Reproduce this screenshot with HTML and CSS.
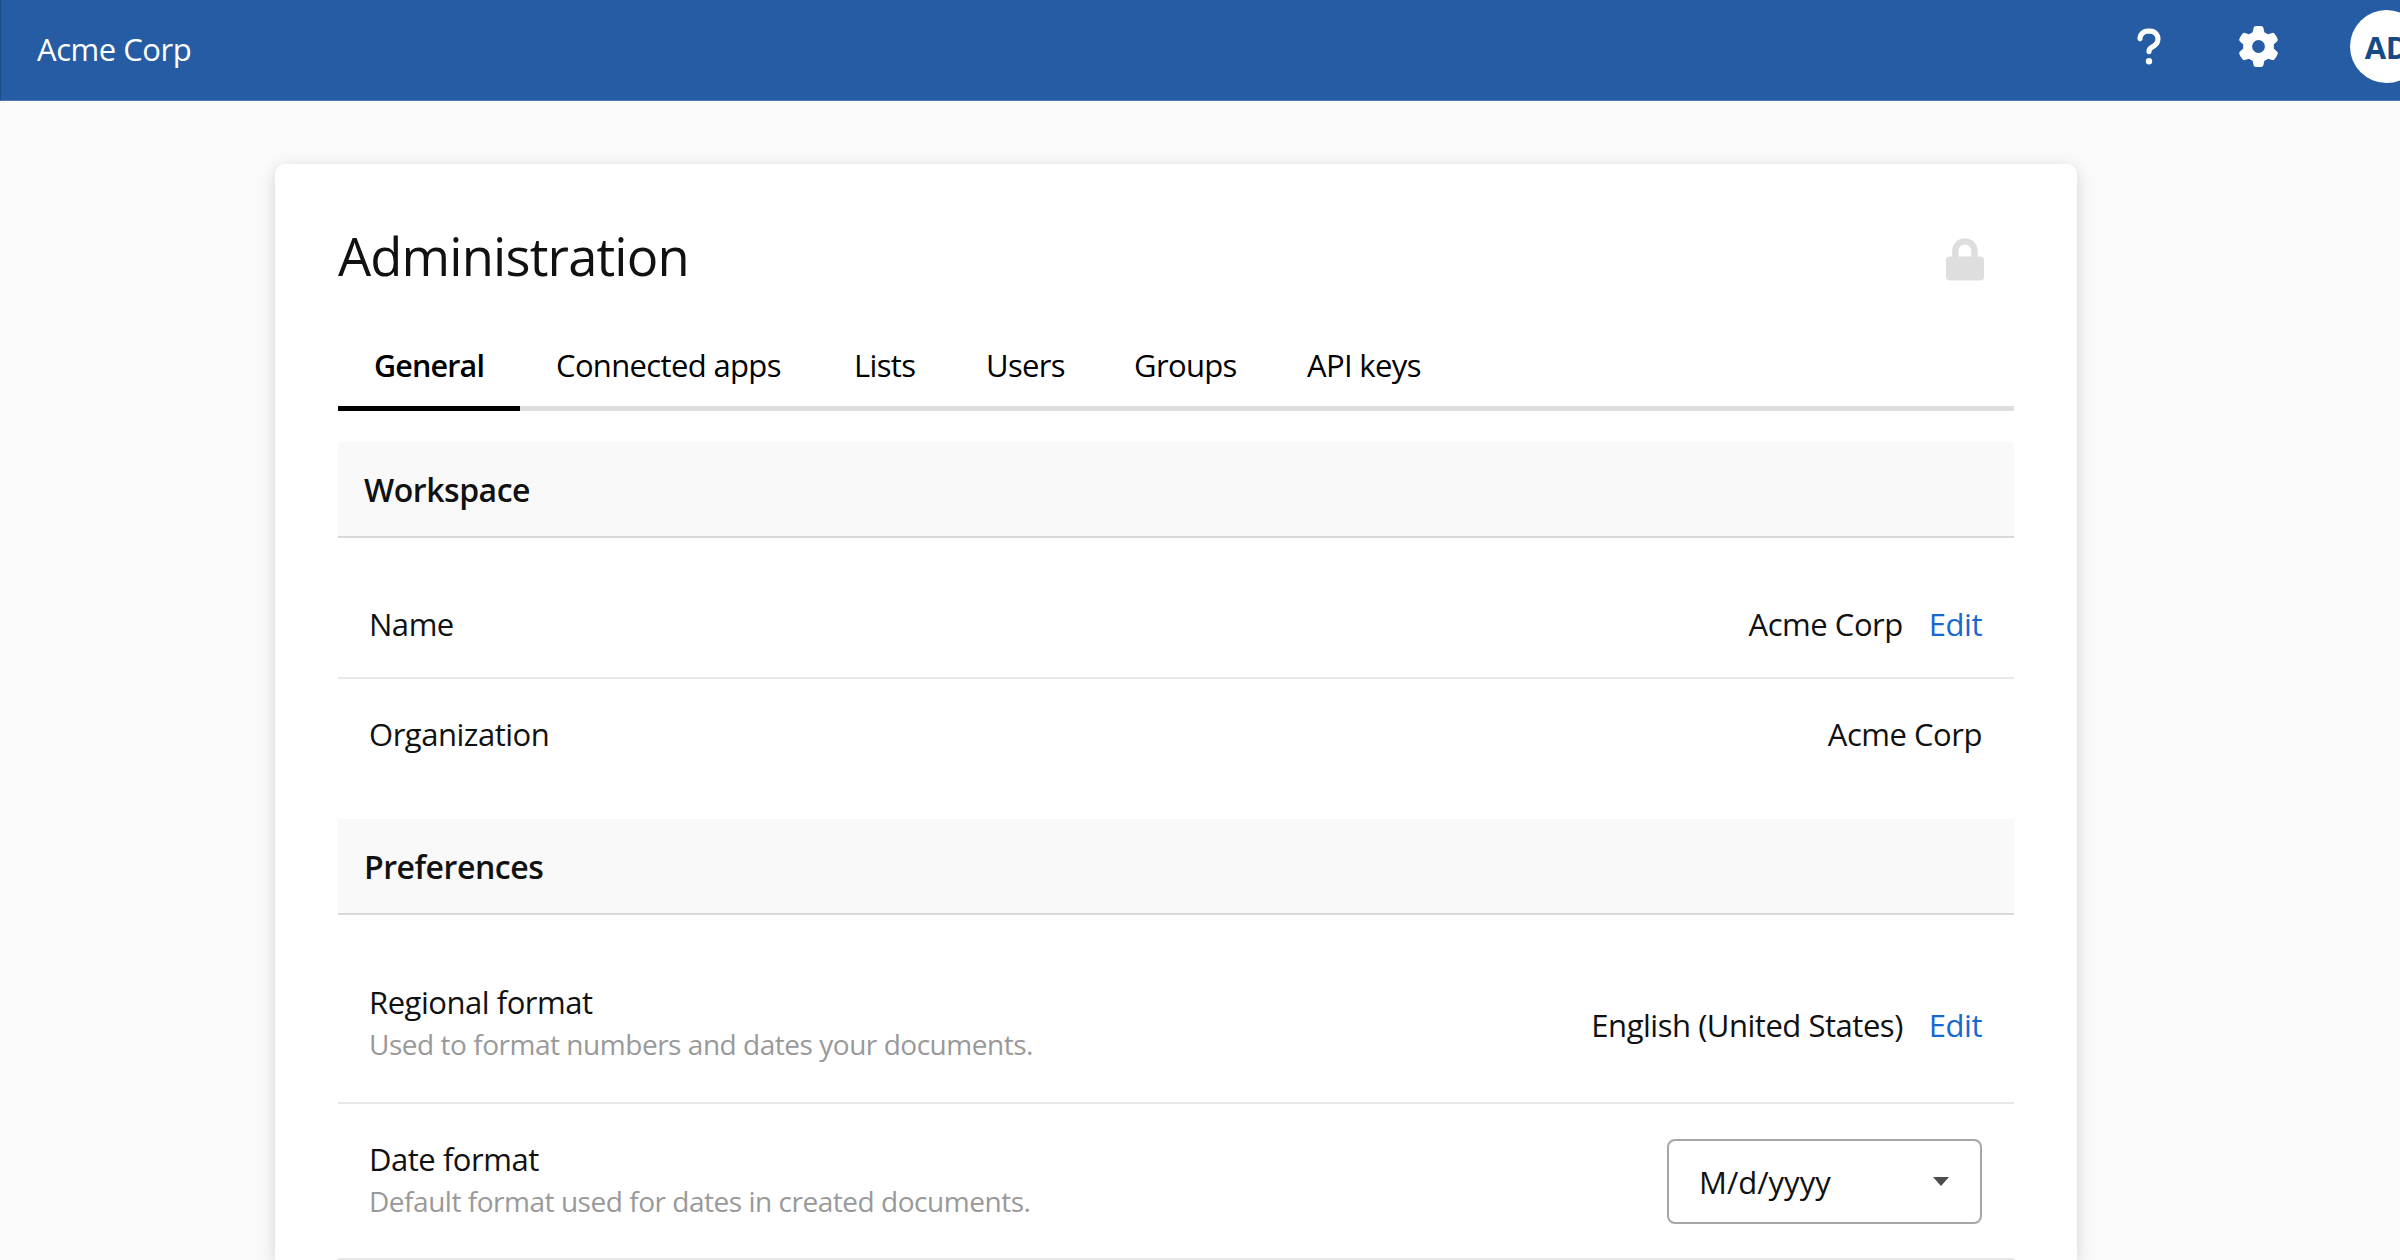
FILE: index.html
```html
<!DOCTYPE html>
<html lang="en">
<head>
    <meta charset="UTF-8">
    <meta name="viewport" content="width=device-width, initial-scale=1.0">
    <title>Administration - Acme Corp</title>
    <link rel="stylesheet" href="styles.css">
</head>
<body>
    <header class="topbar">
        <span class="brand">Acme Corp</span>
        <nav class="topbar-actions">
            <a class="icon-link" aria-label="Help">
                <svg class="icon-help" viewBox="0 0 320 512" fill="currentColor"><path d="M80 160c0-35.3 28.7-64 64-64h32c35.3 0 64 28.7 64 64v3.6c0 21.8-11.1 42.1-29.4 53.8l-42.2 27.1c-25.2 16.2-40.4 44.1-40.4 74V320c0 17.7 14.3 32 32 32s32-14.3 32-32v-1.4c0-8.2 4.2-15.8 11-20.2l42.2-27.1c36.6-23.6 58.8-64.1 58.8-107.7V160c0-70.7-57.3-128-128-128H144C73.3 32 16 89.3 16 160c0 17.7 14.3 32 32 32s32-14.3 32-32zm80 320a40 40 0 1 0 0-80 40 40 0 1 0 0 80z"/></svg>
            </a>
            <a class="icon-link" aria-label="Settings">
                <svg class="icon-gear" viewBox="0 0 512 512" fill="currentColor"><path d="M495.9 166.6c3.2 8.7 .5 18.4-6.4 24.6l-43.3 39.4c1.1 8.3 1.7 16.8 1.7 25.4s-.6 17.1-1.7 25.4l43.3 39.4c6.9 6.2 9.6 15.9 6.4 24.6c-4.4 11.9-9.7 23.3-15.8 34.3l-4.7 8.1c-6.6 11-14 21.4-22.1 31.2c-5.9 7.2-15.7 9.6-24.5 6.8l-55.7-17.7c-13.4 10.3-28.2 18.9-44 25.4l-12.5 57.1c-2 9.1-9 16.3-18.2 17.8c-13.8 2.3-28 3.5-42.5 3.5s-28.7-1.2-42.5-3.5c-9.2-1.5-16.2-8.7-18.2-17.8l-12.5-57.1c-15.8-6.5-30.6-15.1-44-25.4L83.1 425.9c-8.8 2.8-18.6 .3-24.5-6.8c-8.1-9.8-15.5-20.2-22.1-31.2l-4.7-8.1c-6.1-11-11.4-22.4-15.8-34.3c-3.2-8.7-.5-18.4 6.4-24.6l43.3-39.4C64.6 273.1 64 264.6 64 256s.6-17.1 1.7-25.4L22.4 191.2c-6.9-6.2-9.6-15.9-6.4-24.6c4.4-11.9 9.7-23.3 15.8-34.3l4.7-8.1c6.6-11 14-21.4 22.1-31.2c5.9-7.2 15.7-9.6 24.5-6.8l55.7 17.7c13.4-10.3 28.2-18.9 44-25.4l12.5-57.1c2-9.1 9-16.3 18.2-17.8C227.3 1.2 241.5 0 256 0s28.7 1.2 42.5 3.5c9.2 1.5 16.2 8.7 18.2 17.8l12.5 57.1c15.8 6.5 30.6 15.1 44 25.4l55.7-17.7c8.8-2.8 18.6-.3 24.5 6.8c8.1 9.8 15.5 20.2 22.1 31.2l4.7 8.1c6.1 11 11.4 22.4 15.8 34.3zM256 336a80 80 0 1 0 0-160 80 80 0 1 0 0 160z"/></svg>
            </a>
            <span class="avatar">AD</span>
        </nav>
    </header>

    <main class="card">
        <div class="card-header">
            <h1>Administration</h1>
            <svg class="icon-lock" viewBox="0 0 38 43"><rect x="0" y="18.5" width="38" height="24" rx="4" fill="#dedede"/><path d="M9.3 20v-7a9.6 9.6 0 0 1 19.2 0v7" fill="none" stroke="#dedede" stroke-width="6.4"/></svg>
        </div>

        <nav class="tabs">
            <a class="tab active">General</a>
            <a class="tab">Connected apps</a>
            <a class="tab">Lists</a>
            <a class="tab">Users</a>
            <a class="tab">Groups</a>
            <a class="tab">API keys</a>
        </nav>

        <section class="section">
            <h2>Workspace</h2>
            <div class="row">
                <div class="setting">Name</div>
                <div class="value"><span>Acme Corp</span><a class="edit">Edit</a></div>
            </div>
            <div class="row">
                <div class="setting">Organization</div>
                <div class="value"><span>Acme Corp</span></div>
            </div>
        </section>

        <section class="section preferences">
            <h2>Preferences</h2>
            <div class="row">
                <div class="setting">
                    <div class="label">Regional format</div>
                    <div class="hint">Used to format numbers and dates your documents.</div>
                </div>
                <div class="value"><span>English (United States)</span><a class="edit">Edit</a></div>
            </div>
            <div class="row">
                <div class="setting">
                    <div class="label">Date format</div>
                    <div class="hint">Default format used for dates in created documents.</div>
                </div>
                <div class="select"><span>M/d/yyyy</span><span class="caret"></span></div>
            </div>
        </section>
    </main>
</body>
</html>
```
FILE: styles.css
```css
* {
    box-sizing: border-box;
}

body {
    margin: 0;
    height: 1260px;
    overflow: hidden;
    background-color: #fafafa;
    color: #111;
    font-family: 'Segoe UI', 'Open Sans', sans-serif;
    font-size: 31px;
    line-height: 42px;
    letter-spacing: -0.47px;
}

.topbar {
    display: flex;
    align-items: center;
    justify-content: space-between;
    height: 101px;
    padding: 0 0 3px 36px;
    background-color: #255ca3;
    border-left: 1px solid #1f4e8b;
    border-bottom: 1px solid #4a78b3;
    color: #fff;
}

.topbar-actions {
    display: flex;
    align-items: center;
    margin-right: -23px;
    padding-bottom: 4px;
}

.icon-link {
    display: flex;
}

.icon-help {
    width: 26px;
    height: 41px;
    margin-right: 76px;
}

.icon-gear {
    width: 41px;
    height: 41px;
    margin-right: 71px;
}

.avatar {
    width: 73px;
    height: 73px;
    border-radius: 50%;
    background-color: #fff;
    color: #164a86;
    font-weight: 700;
    line-height: 74px;
    text-align: center;
}

.card {
    width: 1802px;
    height: 1096px;
    margin: 63px 0 0 275px;
    padding: 0 63px;
    background-color: #fff;
    border-radius: 10px 10px 0 0;
    box-shadow: 0 4px 16px rgba(0, 0, 0, 0.16);
}

.card-header {
    display: flex;
    align-items: center;
    justify-content: space-between;
    height: 179px;
    padding: 11px 30px 0 0;
}

h1 {
    margin: 0 0 7px;
    font-size: 52.5px;
    font-weight: 400;
    line-height: 72px;
    letter-spacing: -0.85px;
}

.icon-lock {
    width: 38px;
    height: 43px;
}

.tabs {
    display: grid;
    grid-template-columns: 182px 298px 132px 148px 173px 1fr;
    height: 68px;
    border-bottom: 5px solid #dedede;
}

.tab {
    padding: 1px 0 0 36px;
    color: #000;
    letter-spacing: -0.65px;
}

.tab.active {
    height: 68px;
    border-bottom: 5px solid #000;
    font-size: 30.5px;
    font-weight: 600;
    letter-spacing: -0.85px;
}

.section {
    padding-top: 31px;
}

.preferences {
    padding-top: 32px;
}

h2 {
    height: 96px;
    margin: 0 0 31px;
    padding: 25px 26px 0;
    background-color: #f9f9f9;
    border-bottom: 2px solid #d9d9d9;
    font-size: 32px;
    font-weight: 600;
    line-height: 46px;
}

.row {
    display: flex;
    align-items: center;
    justify-content: space-between;
    height: 108px;
    padding: 0 32px 0 31px;
}

.row + .row {
    height: 110px;
    border-top: 2px solid #e8e8e8;
}

.preferences .row {
    height: 156px;
}

.preferences .row:last-child {
    height: 158px;
    border-bottom: 2px solid #e8e8e8;
}

.setting {
    padding-top: 2px;
}

.preferences .setting {
    padding: 0 0 1px;
}

.hint {
    color: #999;
    font-size: 28px;
    line-height: 43px;
}

.value {
    display: flex;
    gap: 26px;
    padding-top: 2px;
}

.edit {
    color: #1769cf;
}

.select {
    display: flex;
    align-items: center;
    justify-content: space-between;
    width: 315px;
    height: 85px;
    padding: 1px 31px 0 30px;
    border: 2px solid #a6a6a6;
    border-radius: 8px;
    letter-spacing: 0;
}

.caret {
    border: 8px solid transparent;
    border-top: 9px solid #4d4d4d;
    border-bottom: 0;
}
```
